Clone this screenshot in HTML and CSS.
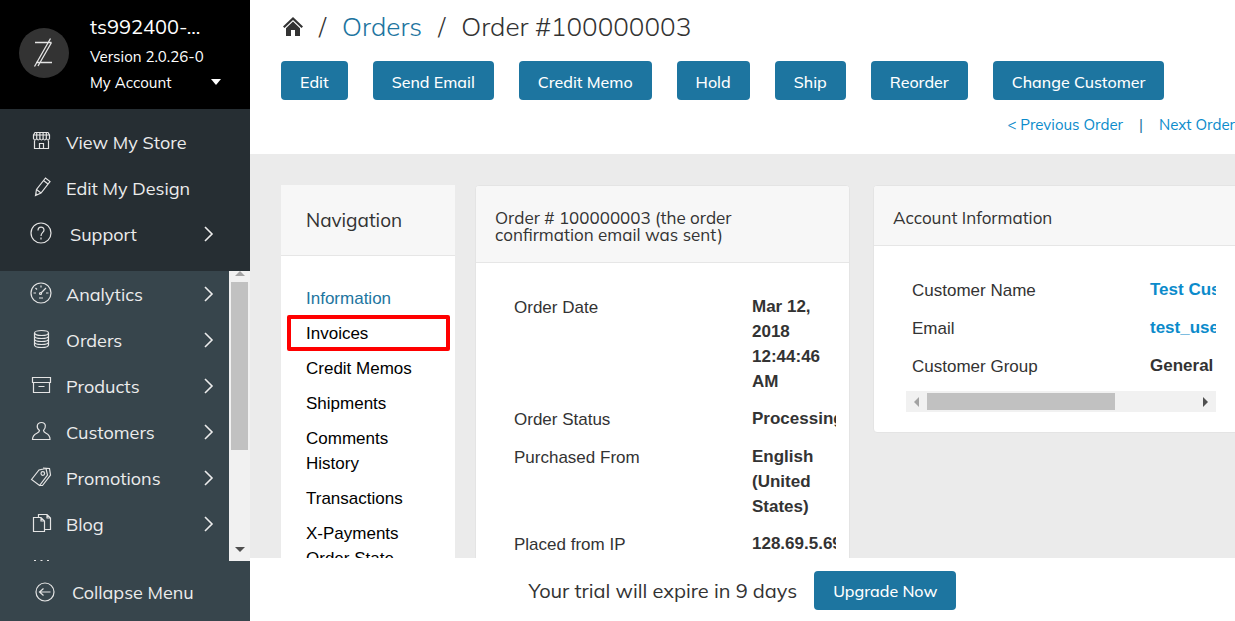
FILE: index.html
```html
<!DOCTYPE html>
<html lang="en-US">
<head>
  <meta charset="UTF-8">
  <meta name="viewport" content="width=device-width">
  <title>Order #100000003</title>
  <link rel="stylesheet" href="styles.css">
</head>

<body>

<aside class="sidebar">
  <div class="account">
    <svg class="logo" viewBox="0 0 50 50">
      <circle cx="25" cy="25" r="25" fill="#333"/>
      <path d="M16 14.5H32.5M17 34.5H33M31.5 10.5L15.5 38.5M32.5 14.5L19 38" fill="none" stroke="#e4e4e4" stroke-width="1.3"/>
    </svg>
    <div class="who">
      <div class="store">ts992400-...</div>
      <div class="version">Version 2.0.26-0</div>
      <button class="my-account" type="button">My Account
        <svg class="caret" viewBox="0 0 10 6"><path d="M0 0H10L5 6Z" fill="#fff"/></svg>
      </button>
    </div>
  </div>

  <nav class="menu quick">
    <a href="#">
      <svg class="icon" viewBox="0 0 22 22"><path d="M5 2.500H18L19.500 5V8.500Q18 11.500 16.300 8.500Q14.800 11.500 13.100 8.500Q11.500 11.500 9.900 8.500Q8.200 11.500 6.700 8.500Q5 11.500 3.500 8.500V5ZM3.500 5H19.500M6.700 3V8.500M9.900 3V8.500M13.100 3V8.500M16.300 3V8.500M4.500 10.500V18.500H18.500V10.500M9.500 18.500V13.500H13.500V18.500"/></svg>
      <span>View My Store</span>
    </a>
    <a href="#">
      <svg class="icon" viewBox="0 0 22 22"><path d="M5.500 19.500L6.500 13.500L15.500 2L20 5.500L11 17ZM13.500 4.500L18 8M6.500 13.500L11 17M5.500 17.500L7.500 19"/></svg>
      <span>Edit My Design</span>
    </a>
    <a href="#" class="wide">
      <svg class="icon" viewBox="0 0 22 22"><circle cx="11" cy="11" r="10"/><path d="M8 8.500C8 4 14 4 14 8C14 10.500 11 10.500 11 14M11 15.500V17.500"/></svg>
      <span>Support</span>
      <svg class="arrow" viewBox="0 0 10 16"><path d="M1 1L8 8L1 15"/></svg>
    </a>
  </nav>

  <div class="scroller">
    <nav class="menu main-menu">
      <a href="#">
        <svg class="icon" viewBox="0 0 22 22"><circle cx="11" cy="11" r="10"/><path d="M11 11L16 6M3.500 11H6M16 11H18.500M11 3.500V5.500M5.500 6L7 7.500M9 16H13"/><circle cx="10.500" cy="11.500" r="1"/></svg>
        <span>Analytics</span>
        <svg class="arrow" viewBox="0 0 10 16"><path d="M1 1L8 8L1 15"/></svg>
      </a>
      <a href="#">
        <svg class="icon" viewBox="0 0 22 22"><ellipse cx="11.500" cy="5" rx="7" ry="2.500"/><path d="M4.500 5V17C4.500 20.300 18.500 20.300 18.500 17V5M4.500 8C4.500 11.300 18.500 11.300 18.500 8M4.500 11C4.500 14.300 18.500 14.300 18.500 11M4.500 14C4.500 17.300 18.500 17.300 18.500 14"/></svg>
        <span>Orders</span>
        <svg class="arrow" viewBox="0 0 10 16"><path d="M1 1L8 8L1 15"/></svg>
      </a>
      <a href="#">
        <svg class="icon" viewBox="0 0 22 22"><path d="M2.500 3.500H20.500V8.500H2.500ZM3.500 8.500V18.500H19.500V8.500M8.500 12.500H14.500"/></svg>
        <span>Products</span>
        <svg class="arrow" viewBox="0 0 10 16"><path d="M1 1L8 8L1 15"/></svg>
      </a>
      <a href="#">
        <svg class="icon" viewBox="0 0 22 22"><path d="M9.500 10.500C6 8 6.500 2.500 11.500 2.500C16.500 2.500 16 8 13.500 10.500C13.500 14 20.500 12.500 20 19.500H2.500C2.500 12.500 9.500 14 9.500 10.500Z"/></svg>
        <span>Customers</span>
        <svg class="arrow" viewBox="0 0 10 16"><path d="M1 1L8 8L1 15"/></svg>
      </a>
      <a href="#">
        <svg class="icon" viewBox="0 0 22 22"><path d="M1.500 13.500L9 4L16 2.500L17.500 9L9.500 19.500ZM13 2L19.500 2.500L20.500 9L12.500 19.500H9.500"/><circle cx="12.800" cy="7.500" r="1.800"/></svg>
        <span>Promotions</span>
        <svg class="arrow" viewBox="0 0 10 16"><path d="M1 1L8 8L1 15"/></svg>
      </a>
      <a href="#">
        <svg class="icon" viewBox="0 0 22 22"><path d="M3.500 5.500H11L14.500 9V19.500H3.500ZM11 5.500V9H14.500M8.500 5V2.500H17L20.500 6V17.500H15M17 2.500V6H20.500"/></svg>
        <span>Blog</span>
        <svg class="arrow" viewBox="0 0 10 16"><path d="M1 1L8 8L1 15"/></svg>
      </a>
      <a href="#" aria-label="More">
        <svg class="icon" viewBox="0 0 22 22"><path d="M4 2.500H6M10.500 2.500H12.500M17 2.500H19M3.500 6.500H19.500V19.500H3.500Z"/></svg>
      </a>
    </nav>
    <div class="vbar">
      <svg class="up" viewBox="0 0 10 5"><path d="M0 5L5 0L10 5Z" fill="#a3a3a3"/></svg>
      <div class="vthumb"></div>
      <svg class="down" viewBox="0 0 10 5"><path d="M0 0L5 5L10 0Z" fill="#505050"/></svg>
    </div>
  </div>

  <button class="collapse" type="button">
    <svg class="icon" viewBox="0 0 22 22"><circle cx="11" cy="11" r="9"/><path d="M16.500 11H5.500M9.500 7.500L5.500 11L9.500 14.500"/></svg>
    <span>Collapse Menu</span>
  </button>
</aside>

<main class="page">
  <header class="top">
    <h1 class="crumbs">
      <a href="#" class="home" aria-label="Home"><svg viewBox="0 0 20 19"><path d="M0 9.500L10 0L20 9.500L18.500 11L10 3L1.500 11ZM3 11.200L10 4.600L17 11.200V19H12V13H8V19H3Z" fill="#333"/></svg></a>
      <span class="sep">/</span>
      <a href="#">Orders</a>
      <span class="sep">/</span>
      <span>Order #100000003</span>
    </h1>
    <div class="actions">
      <button class="btn" type="button">Edit</button>
      <button class="btn" type="button">Send Email</button>
      <button class="btn" type="button">Credit Memo</button>
      <button class="btn" type="button">Hold</button>
      <button class="btn" type="button">Ship</button>
      <button class="btn" type="button">Reorder</button>
      <button class="btn" type="button">Change Customer</button>
    </div>
    <div class="pager">
      <a href="#">&lt; Previous Order</a>
      <span class="bar">|</span>
      <a href="#">Next Order</a>
    </div>
  </header>

  <div class="content">
    <section class="side-nav">
      <h2>Navigation</h2>
      <ul>
        <li><a href="#" class="current">Information</a></li>
        <li class="marked"><a href="#">Invoices</a></li>
        <li><a href="#">Credit Memos</a></li>
        <li><a href="#">Shipments</a></li>
        <li><a href="#">Comments History</a></li>
        <li><a href="#">Transactions</a></li>
        <li><a href="#">X-Payments Order State</a></li>
      </ul>
    </section>

    <section class="card order">
      <h3>Order # 100000003 (the order confirmation email was sent)</h3>
      <div class="card-body">
        <table>
          <tr><th>Order Date</th><td>Mar 12, 2018 12:44:46 AM</td></tr>
          <tr><th>Order Status</th><td>Processing</td></tr>
          <tr><th>Purchased From</th><td>English (United States)</td></tr>
          <tr><th>Placed from IP</th><td>128.69.5.69</td></tr>
        </table>
      </div>
    </section>

    <section class="card customer">
      <h3>Account Information</h3>
      <div class="card-body">
        <table>
          <tr><th>Customer Name</th><td><a href="#">Test Customer</a></td></tr>
          <tr><th>Email</th><td><a href="#">test_user</a></td></tr>
          <tr><th>Customer Group</th><td>General</td></tr>
        </table>
        <div class="hbar">
          <svg viewBox="0 0 5 10"><path d="M5 0L0 5L5 10Z" fill="#a3a3a3"/></svg>
          <div class="track"><div class="hthumb"></div></div>
          <svg viewBox="0 0 5 10"><path d="M0 0L5 5L0 10Z" fill="#505050"/></svg>
        </div>
      </div>
    </section>
  </div>

  <footer class="trial">
    <span>Your trial will expire in 9 days</span>
    <button class="btn" type="button">Upgrade Now</button>
  </footer>
</main>

</body>
</html>
```
FILE: styles.css
```css
* {
    box-sizing: border-box;
}
body {
    margin: 0;
    display: flex;
    height: 100vh;
    overflow: hidden;
    color: #333;
    font-family: Muli, Mulish, Lato, sans-serif;
}
a {
    color: #1d75a0;
    text-decoration: none;
}
button {
    border: 0;
    font-family: inherit;
    cursor: pointer;
}
svg {
    display: block;
    flex: none;
}

/* sidebar */
.sidebar {
    flex: none;
    width: 250px;
    display: flex;
    flex-direction: column;
    background: #37454c;
    color: #ececec;
}
.account {
    display: flex;
    gap: 21px;
    height: 109px;
    padding: 14px 29px 0 19px;
    background: #000;
    color: #fff;
}
.logo {
    width: 50px;
    height: 50px;
    margin-top: 14px;
}
.who {
    flex: 1;
    font-size: 15px;
    line-height: 26px;
}
.store {
    font-size: 20px;
}
.version {
    margin-top: 4px;
}
.my-account {
    display: flex;
    align-items: center;
    justify-content: space-between;
    width: 100%;
    padding: 0;
    background: none;
    color: #fff;
    font-size: 15px;
    line-height: 26px;
}
.caret {
    width: 10px;
    height: 6px;
    margin-bottom: 3px;
}
.menu a {
    display: flex;
    align-items: center;
    height: 46px;
    padding: 0 15px 0 30px;
    color: #ececec;
    font-size: 18px;
}
.quick {
    padding: 10px 21px 14px 0;
    background: #262e33;
}
.icon {
    width: 22px;
    height: 22px;
    margin: 0 14px 2px 0;
    fill: none;
    stroke: #e4e4e4;
    stroke-width: 1.2;
}
.wide .icon {
    margin-right: 18px;
}
.arrow {
    width: 10px;
    height: 16px;
    margin-left: auto;
    fill: none;
    stroke: #ececec;
    stroke-width: 1.6;
}
.scroller {
    flex: 1;
    min-height: 0;
    display: flex;
    overflow: hidden;
}
.main-menu {
    flex: 1;
}
.vbar {
    width: 21px;
    display: flex;
    flex-direction: column;
    align-items: center;
    background: #f1f1f1;
}
.up, .down {
    width: 10px;
    height: 5px;
}
.vthumb {
    width: 17px;
    height: 168px;
    margin-top: 6px;
    background: #c1c1c1;
}
.down {
    margin: auto 0 9px;
}
.collapse {
    display: flex;
    align-items: center;
    height: 60px;
    padding: 3px 34px 0;
    background: none;
    color: #ececec;
    font-size: 18px;
}
.collapse .icon {
    margin-right: 16px;
}

/* page header */
.page {
    flex: 1;
    min-width: 0;
    display: flex;
    flex-direction: column;
}
.top {
    height: 154px;
    padding-left: 31px;
    background: #fff;
}
.crumbs {
    display: flex;
    align-items: center;
    gap: 16px;
    height: 52px;
    margin: 0 0 9px;
    font-size: 26px;
    font-weight: 300;
}
.home svg {
    width: 20px;
    height: 19px;
    margin-left: 2px;
}
.actions {
    display: flex;
    gap: 25px;
}
.btn {
    height: 39px;
    padding: 2px 19px 0;
    border-radius: 4px;
    background: #1d75a0;
    color: #fff;
    font-size: 16px;
    font-weight: 500;
    white-space: nowrap;
}
.pager {
    display: flex;
    justify-content: flex-end;
    gap: 16px;
    padding-top: 14px;
    font-size: 15px;
    line-height: 22px;
}
.pager a, td a {
    color: #0b8bcb;
}
.bar {
    color: #1d75a0;
}

/* order view */
.content {
    flex: 1;
    min-height: 0;
    display: grid;
    grid-template-columns: 174px minmax(378px, 1fr) minmax(378px, 1fr);
    align-items: start;
    column-gap: 20px;
    padding: 31px 0 0 31px;
    overflow: hidden;
    background: #ebebeb;
    font-family: "Liberation Sans", Arial, sans-serif;
    font-size: 17px;
    line-height: 25px;
}
.side-nav {
    background: #fff;
}
h2, h3 {
    margin: 0;
    background: #f7f7f7;
    border-bottom: 1px solid #e6e6e6;
    font-family: Muli, Mulish, Lato, sans-serif;
    font-weight: 400;
}
h2 {
    padding: 23px 25px;
    font-size: 19px;
    line-height: 24px;
}
.side-nav ul {
    margin: 0;
    padding: 30px 25px;
    list-style: none;
}
.side-nav li {
    position: relative;
    margin-bottom: 10px;
}
.side-nav li a {
    color: #000;
}
.side-nav li .current {
    color: #1d75a0;
}
.marked::before {
    content: "";
    position: absolute;
    inset: -6px -20px -5px -19px;
    border: 4px solid #f00;
    border-radius: 2px;
    pointer-events: none;
}
.card {
    background: #fff;
    border: 1px solid #e4e4e4;
    border-radius: 4px;
    overflow: hidden;
}
.order {
    margin-right: 3px;
}
h3 {
    padding: 23px 100px 19px 19px;
    font-size: 17px;
    line-height: 17px;
}
.card-body {
    margin: 31px 13px 20px 32px;
    overflow: hidden;
}
.card-body table {
    width: 100%;
    border-spacing: 0;
    table-layout: fixed;
}
th, td {
    text-align: left;
    vertical-align: top;
}
th {
    width: 238px;
    padding: 1px 0 12px 6px;
    font-weight: 400;
}
td {
    padding: 0 0 12px 6px;
    font-weight: 700;
}
.customer td {
    white-space: nowrap;
}
.customer .card-body {
    margin-right: 34px;
}
.hbar {
    display: flex;
    align-items: center;
    height: 21px;
    padding: 0 8px;
    background: #f1f1f1;
}
.hbar svg {
    width: 5px;
    height: 10px;
}
.track {
    flex: 1;
    padding: 0 8px;
}
.hthumb {
    width: 70%;
    height: 17px;
    background: #c1c1c1;
}

/* trial notice */
.trial {
    display: flex;
    align-items: center;
    justify-content: center;
    gap: 17px;
    height: 63px;
    padding-top: 1px;
    background: #fff;
    font-size: 20px;
}
```
